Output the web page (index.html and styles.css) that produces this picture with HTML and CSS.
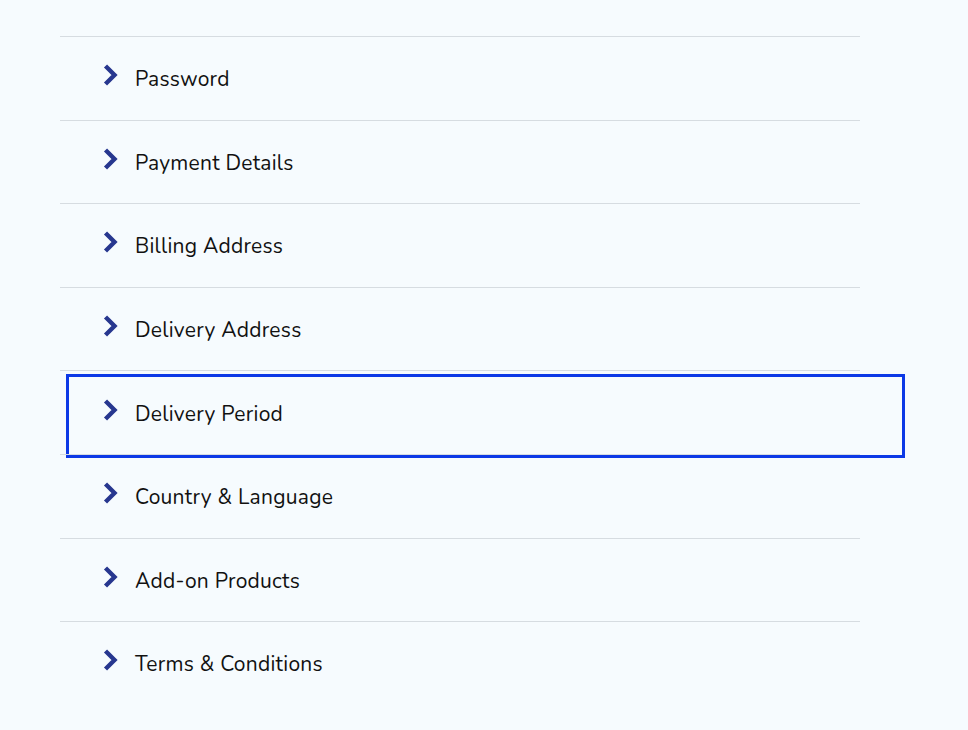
FILE: index.html
```html
<!DOCTYPE html>
<html>
<head>
<meta charset="utf-8">
<link rel="stylesheet" href="styles.css">
</head>
<body>
<ul class="menu">
  <li class="item"><svg class="chev" viewBox="0 0 16 22"><polyline points="3.5,2 12.5,11 3.5,20"/></svg><span>Password</span></li>
  <li class="item"><svg class="chev" viewBox="0 0 16 22"><polyline points="3.5,2 12.5,11 3.5,20"/></svg><span>Payment Details</span></li>
  <li class="item"><svg class="chev" viewBox="0 0 16 22"><polyline points="3.5,2 12.5,11 3.5,20"/></svg><span>Billing Address</span></li>
  <li class="item"><svg class="chev" viewBox="0 0 16 22"><polyline points="3.5,2 12.5,11 3.5,20"/></svg><span>Delivery Address</span></li>
  <li class="item focused"><svg class="chev" viewBox="0 0 16 22"><polyline points="3.5,2 12.5,11 3.5,20"/></svg><span>Delivery Period</span><div class="focus-ring"></div></li>
  <li class="item"><svg class="chev" viewBox="0 0 16 22"><polyline points="3.5,2 12.5,11 3.5,20"/></svg><span>Country &amp; Language</span></li>
  <li class="item"><svg class="chev" viewBox="0 0 16 22"><polyline points="3.5,2 12.5,11 3.5,20"/></svg><span>Add-on Products</span></li>
  <li class="item"><svg class="chev" viewBox="0 0 16 22"><polyline points="3.5,2 12.5,11 3.5,20"/></svg><span>Terms &amp; Conditions</span></li>
</ul>
</body>
</html>
```
FILE: styles.css
```css
html, body {
  margin: 0;
  padding: 0;
  background: #f6fbfe;
  height: 100%;
}
body {
  font-family: "Nunito", "Lato", "Noto Sans", sans-serif;
  color: #111111;
}
.menu {
  list-style: none;
  margin: 36px 0 0 60px;
  padding: 0;
  width: 800px;
}
.item {
  position: relative;
  box-sizing: border-box;
  height: 83.6px;
  border-top: 1px solid #d6dce1;
  display: flex;
  align-items: center;
  padding-left: 42px;
  font-size: 21px;
  font-weight: 400;
  letter-spacing: 0.25px;
}
.item span {
  margin-left: 17px;
  padding-top: 2px;
}
.chev {
  width: 16px;
  height: 22px;
  margin-top: -6px;
}
.chev polyline {
  fill: none;
  stroke: #27378f;
  stroke-width: 4.4;
  stroke-linejoin: miter;
  stroke-linecap: butt;
}
.focus-ring {
  position: absolute;
  left: 6px;
  right: -45px;
  top: 3px;
  height: 84px;
  box-sizing: border-box;
  border: 3px solid #0c39e6;
  pointer-events: none;
}
```
